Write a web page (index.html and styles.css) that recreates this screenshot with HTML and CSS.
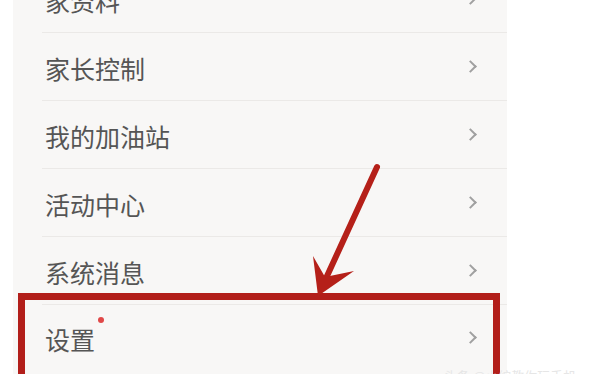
FILE: index.html
```html
<!DOCTYPE html>
<html lang="zh">
<head>
<meta charset="utf-8">
<title>设置</title>
<link rel="stylesheet" href="styles.css">
</head>
<body>
<div class="page">
  <ul class="menu">
    <li class="row"><span class="label">家资料</span><span class="chev"></span></li>
    <li class="row"><span class="label">家长控制</span><span class="chev"></span></li>
    <li class="row"><span class="label">我的加油站</span><span class="chev"></span></li>
    <li class="row"><span class="label">活动中心</span><span class="chev"></span></li>
    <li class="row"><span class="label">系统消息</span><span class="chev"></span></li>
    <li class="row last"><span class="label">设置<span class="dot"></span></span><span class="chev"></span></li>
  </ul>
  <div class="highlight"></div>
  <svg class="arrow" width="592" height="374" viewBox="0 0 592 374">
    <line x1="377" y1="167" x2="322" y2="287" stroke="#b52019" stroke-width="6" stroke-linecap="round"/>
    <polygon points="318,296 313,256 325,277 354,271" fill="#b52019"/>
  </svg>
  <div class="watermark">头条 @小编教你玩手机</div>
</div>
</body>
</html>
```
FILE: styles.css
```css
html, body {
  margin: 0;
  padding: 0;
  background: #ffffff;
  overflow: hidden;
}
.page {
  position: relative;
  width: 592px;
  height: 374px;
  overflow: hidden;
  background: #ffffff;
}
.menu {
  list-style: none;
  margin: -35px 0 0 13px;
  padding: 0;
  width: 494px;
  background: #f8f7f6;
  height: 420px;
}
.row {
  display: flex;
  align-items: center;
  justify-content: space-between;
  height: 67px;
  margin-left: 29px;
  padding: 0 30px 0 3px;
  border-bottom: 1px solid #ebe9e7;
  font-family: "Noto Sans CJK SC", "Noto Sans", sans-serif;
  font-size: 25px;
  color: #555555;
}
.row.last {
  border-bottom: none;
  height: 64px;
  padding-bottom: 8px;
}
.label {
  position: relative;
  line-height: 1;
  padding-top: 4px;
}
.dot {
  position: absolute;
  right: -9px;
  top: -6px;
  width: 6px;
  height: 6px;
  border-radius: 50%;
  background: #e04848;
}
.chev {
  width: 7px;
  height: 7px;
  border-right: 2px solid #a0a0a0;
  border-top: 2px solid #a0a0a0;
  transform: rotate(45deg);
  margin-right: 2px;
}
.highlight {
  position: absolute;
  left: 18px;
  top: 293px;
  width: 468px;
  height: 74px;
  border: 7px solid #b21e1a;
}
.arrow {
  position: absolute;
  left: 0;
  top: 0;
}
.watermark {
  position: absolute;
  left: 444px;
  top: 366px;
  font-family: "Noto Sans CJK SC", sans-serif;
  font-size: 13px;
  color: #e6e6e6;
  white-space: nowrap;
}
```
